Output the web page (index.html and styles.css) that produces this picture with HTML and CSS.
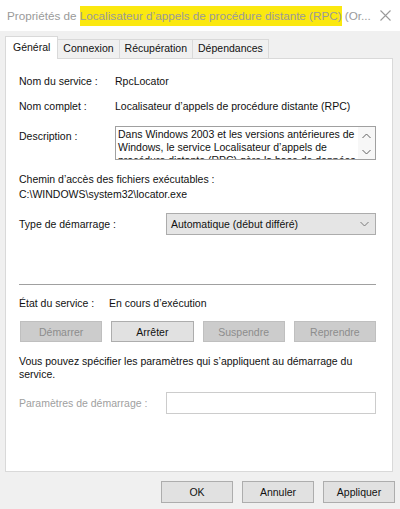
FILE: index.html
```html
<!DOCTYPE html>
<html lang="fr">
<head>
  <meta charset="UTF-8">
  <meta name="viewport" content="width=device-width, initial-scale=1.0">
  <title>Propriétés du service</title>
  <link rel="stylesheet" href="styles.css">
</head>
<body>

  <div class="window">
    <div class="titlebar">
      <span class="title">Propriétés de <mark class="hl">Localisateur d’appels de procédure distante (RPC)</mark> (Or...</span>
      <svg class="close" width="11" height="11" viewBox="0 0 11 11">
        <path d="M0.5 0.5 L10.5 10.5 M10.5 0.5 L0.5 10.5" stroke="#9a9a9a" stroke-width="1.1" fill="none"/>
      </svg>
    </div>

    <div class="tabs">
      <div class="tab active">Général</div>
      <div class="tab">Connexion</div>
      <div class="tab">Récupération</div>
      <div class="tab">Dépendances</div>
    </div>

    <div class="panel">
      <div class="row">
        <span class="label">Nom du service :</span>
        <span>RpcLocator</span>
      </div>
      <div class="row row-second">
        <span class="label">Nom complet :</span>
        <span>Localisateur d’appels de procédure distante (RPC)</span>
      </div>
      <div class="row desc-row">
        <span class="label desc-label">Description :</span>
        <div class="desc">
          <div class="desc-text">
            <span>Dans Windows 2003 et les versions antérieures de</span>
            <span>Windows, le service Localisateur d’appels de</span>
            <span>procédure distante (RPC) gère la base de données</span>
          </div>
          <div class="scroll">
            <svg width="9" height="6" viewBox="0 0 9 6"><path d="M0.5 5 L4.5 1 L8.5 5" stroke="#606060" fill="none"/></svg>
            <svg width="9" height="6" viewBox="0 0 9 6"><path d="M0.5 1 L4.5 5 L8.5 1" stroke="#606060" fill="none"/></svg>
          </div>
        </div>
      </div>

      <div class="path-label">Chemin d’accès des fichiers exécutables :</div>
      <div class="path">C:\WINDOWS\system32\locator.exe</div>

      <div class="field">
        <span class="field-label">Type de démarrage :</span>
        <div class="select">
          <span>Automatique (début différé)</span>
          <svg width="9" height="6" viewBox="0 0 9 6"><path d="M0.5 1 L4.5 5 L8.5 1" stroke="#7a7a7a" fill="none"/></svg>
        </div>
      </div>

      <hr class="sep">

      <div class="state">
        <span class="state-label">État du service :</span>
        <span>En cours d’exécution</span>
      </div>

      <div class="actions">
        <button class="btn" disabled>Démarrer</button>
        <button class="btn">Arrêter</button>
        <button class="btn" disabled>Suspendre</button>
        <button class="btn" disabled>Reprendre</button>
      </div>

      <p class="hint">Vous pouvez spécifier les paramètres qui s’appliquent au démarrage du<br>service.</p>

      <div class="field params">
        <span class="field-label muted">Paramètres de démarrage :</span>
        <div class="input"></div>
      </div>
    </div>

    <div class="footer">
      <button class="btn">OK</button>
      <button class="btn">Annuler</button>
      <button class="btn">Appliquer</button>
    </div>
  </div>

</body>
</html>
```

FILE: styles.css
```css
/* Boite de dialogue des services Windows */
body {
  margin: 0;
  font-family: "Liberation Sans", Arial, sans-serif;
  font-size: 10.5px;
  color: #111;
}

.window {
  width: 400px;
  height: 509px;
  background-color: #f0f0f0;
  overflow: hidden;
}

.titlebar {
  height: 31px;
  background-color: #fff;
  display: flex;
  align-items: center;
  justify-content: space-between;
  padding: 0 9px 0 7px;
}

.title {
  font-size: 11.7px;
  color: #9a9a9a;
  white-space: nowrap;
}

.hl {
  background-color: #fbe80f;
  color: #9a9a9a;
  padding: 3px 0 4px;
}

/* Onglets */
.tabs {
  display: flex;
  align-items: flex-end;
  height: 27px;
  padding-left: 5px;
}

.tab {
  height: 18px;
  line-height: 17px;
  padding: 0 5px;
  border: 1px solid #d9d9d9;
  border-bottom: none;
  margin-left: -1px;
  background-color: #f0f0f0;
  font-size: 10.5px;
}

.tab:first-child {
  margin-left: 0;
}

.tab.active {
  height: 22px;
  line-height: 21px;
  background-color: #fff;
  margin-bottom: -1px;
  position: relative;
  z-index: 1;
  padding: 0 7px;
}

.panel {
  box-sizing: border-box;
  height: 414px;
  margin: 0 7px 0 5px;
  background-color: #fff;
  border: 1px solid #d9d9d9;
  padding: 15px 16px 0 13px;
}

/* Lignes d'informations */
.row {
  display: flex;
  line-height: 14px;
}

.label {
  width: 96px;
  flex-shrink: 0;
}

.row-second {
  margin-top: 11px;
}

.desc-row {
  margin-top: 13px;
}

.desc-label {
  padding-top: 3px;
}

.desc {
  box-sizing: border-box;
  flex: 1;
  height: 34px;
  border: 1px solid #a0a0a0;
  display: flex;
  overflow: hidden;
}

.desc-text {
  flex: 1;
  padding: 1px 0 0 2px;
  line-height: 13px;
}

.desc-text span {
  display: block;
  white-space: nowrap;
}

.scroll {
  width: 17px;
  display: flex;
  flex-direction: column;
  align-items: center;
  justify-content: space-between;
  padding: 6px 0 4px;
  background-color: #f7f7f7;
}

.path-label {
  margin-top: 12px;
  line-height: 15px;
}

.path {
  line-height: 15px;
}

.field {
  display: flex;
  align-items: center;
  margin-top: 11px;
}

.field-label {
  width: 147px;
  flex-shrink: 0;
}

.select {
  box-sizing: border-box;
  flex: 1;
  height: 22px;
  background-color: #e5e5e5;
  border: 1px solid #acacac;
  display: flex;
  align-items: center;
  justify-content: space-between;
  padding: 0 6px 0 4px;
}

.sep {
  margin: 49px 0 0;
  border: none;
  border-top: 1px solid #a0a0a0;
}

.state {
  display: flex;
  margin-top: 11px;
  line-height: 14px;
}

.state-label {
  width: 90px;
}

.actions {
  display: grid;
  grid-template-columns: repeat(4, 1fr);
  gap: 9px;
  margin-top: 11px;
  padding-left: 1px;
}

.btn {
  height: 21px;
  padding: 0;
  font-family: inherit;
  font-size: 10.5px;
  color: #111;
  background-color: #e1e1e1;
  border: 1px solid #adadad;
  border-radius: 0;
}

.btn:disabled {
  background-color: #cccccc;
  border-color: #bfbfbf;
  color: #8d8d8d;
}

.hint {
  margin: 13px 0 0;
  line-height: 13px;
}

.muted {
  color: #a0a0a0;
}

.input {
  box-sizing: border-box;
  flex: 1;
  height: 22px;
  border: 1px solid #cccccc;
  background-color: #fff;
}

.footer {
  display: flex;
  justify-content: flex-end;
  gap: 9px;
  padding: 9px 5px 0 0;
}

.footer .btn {
  width: 72px;
  height: 22px;
}
```
